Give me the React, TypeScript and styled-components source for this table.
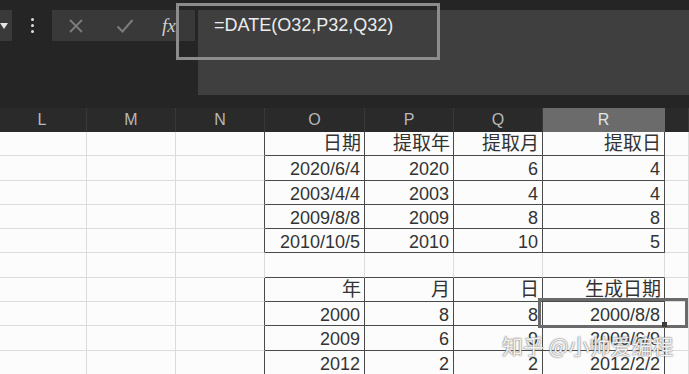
import React from 'react';
import styled, { createGlobalStyle } from 'styled-components';

const GlobalStyle = createGlobalStyle`
  html, body {
    margin: 0;
    padding: 0;
    background: #262626;
  }
  body {
    font-family: 'Liberation Sans', 'Noto Sans CJK SC', sans-serif;
  }
`;

const Window = styled.div`
  position: relative;
  width: 689px;
  height: 374px;
  overflow: hidden;
  background: #262626;
  display: flex;
  flex-direction: column;
`;

/* ---------- formula bar ---------- */

const FormulaBar = styled.div`
  flex: none;
  height: 108px;
  box-sizing: border-box;
  padding-top: 10px;
  display: flex;
  align-items: flex-start;
  background: #252525;
`;

const NameBox = styled.div`
  width: 12px;
  height: 31px;
  background: #3a3a3a;
  display: flex;
  align-items: center;
`;

const Caret = styled.span`
  width: 0;
  height: 0;
  margin-left: 0;
  border-left: 4px solid transparent;
  border-right: 4px solid transparent;
  border-top: 6px solid #e6e6e6;
`;

const DotsButton = styled.div`
  width: 40px;
  height: 31px;
  display: flex;
  flex-direction: column;
  align-items: center;
  justify-content: center;
  gap: 3px;
`;

const Dot = styled.span`
  width: 3px;
  height: 3px;
  border-radius: 50%;
  background: #dcdcdc;
`;

const EditButtons = styled.div`
  width: 143px;
  height: 31px;
  background: #393939;
  display: flex;
  align-items: center;
  padding-left: 16px;
  box-sizing: border-box;
  gap: 32px;
`;

const FxLabel = styled.span`
  font-family: 'Liberation Serif', serif;
  font-style: italic;
  font-size: 19px;
  color: #d0d0d0;
  margin-left: -4px;
`;

const FormulaInput = styled.div`
  flex: 1;
  height: 85px;
  margin-left: 3px;
  background: #3f3f3f;
  box-sizing: border-box;
  padding: 3px 0 0 16px;
  font-size: 18px;
  line-height: 24px;
  color: #ececec;
`;

const Frame = styled.div<{ $tone: string }>`
  position: absolute;
  box-sizing: border-box;
  border: 3px solid ${(p) => p.$tone};
  pointer-events: none;
`;

/* ---------- sheet ---------- */

const Sheet = styled.div`
  flex: 1;
  display: grid;
  grid-template-columns: 89px 89px 89px 100px 89px 89px 122px 1fr;
  grid-auto-rows: 24.3px;
  grid-template-rows: 24px;
  margin-left: -2px;
  background: #fcfcfc;
`;

const ColHead = styled.div<{ $active?: boolean }>`
  background: ${(p) => (p.$active ? '#6b6b6b' : '#2a2a2a')};
  color: ${(p) => (p.$active ? '#e4e4e4' : '#b8b8b8')};
  border-right: 1px solid ${(p) => (p.$active ? '#6b6b6b' : '#383838')};
  font-size: 16px;
  display: flex;
  align-items: center;
  justify-content: center;
  box-sizing: border-box;
`;

const Cell = styled.div<{ $right: string; $bottom: string; $cjk?: boolean }>`
  box-sizing: border-box;
  border-right: 1px solid ${(p) => p.$right};
  border-bottom: 1px solid ${(p) => p.$bottom};
  padding: ${(p) => (p.$cjk ? '1px 3px 0 0' : '2px 4px 0 0')};
  text-align: right;
  font-size: ${(p) => (p.$cjk ? '19px' : '18px')};
  line-height: 22px;
  color: #333;
  white-space: nowrap;
  overflow: hidden;
`;

const FillHandle = styled.span`
  position: absolute;
  left: 662px;
  top: 322px;
  width: 5px;
  height: 5px;
  background: #3c3c3c;
`;

const Watermark = styled.div`
  position: absolute;
  left: 502px;
  top: 330px;
  font-family: 'Noto Sans CJK SC', sans-serif;
  font-size: 21px;
  color: rgba(255, 255, 255, 0.92);
  text-shadow: 0 0 1px #666, 0 0 2px #888;
  white-space: nowrap;
  pointer-events: none;
`;

const COLUMNS = ['L', 'M', 'N', 'O', 'P', 'Q', 'R', ''];

// values for columns O..R, one entry per sheet row
const ROWS: string[][] = [
  ['日期', '提取年', '提取月', '提取日'],
  ['2020/6/4', '2020', '6', '4'],
  ['2003/4/4', '2003', '4', '4'],
  ['2009/8/8', '2009', '8', '8'],
  ['2010/10/5', '2010', '10', '5'],
  [],
  ['年', '月', '日', '生成日期'],
  ['2000', '8', '8', '2000/8/8'],
  ['2009', '6', '9', '2009/6/9'],
  ['2012', '2', '2', '2012/2/2'],
];

const GRID = '#dcdcdc';
const EDGE = '#4a4a4a';

const inTable = (r: number, c: number) =>
  c >= 3 && c <= 6 && ((r >= 0 && r <= 4) || (r >= 6 && r <= 9));

const isCjk = (s: string) => /[\u4e00-\u9fff]/.test(s);

function CrossIcon() {
  return (
    <svg width="16" height="16" viewBox="0 0 16 16">
      <path d="M2 2 L14 14 M14 2 L2 14" stroke="#7c7c7c" strokeWidth="1.8" fill="none" />
    </svg>
  );
}

function CheckIcon() {
  return (
    <svg width="18" height="16" viewBox="0 0 18 16">
      <path d="M1.5 8.5 L6.5 13.5 L16.5 2" stroke="#7c7c7c" strokeWidth="2" fill="none" />
    </svg>
  );
}

export default function App() {
  return (
    <Window>
      <GlobalStyle />
      <FormulaBar>
        <NameBox>
          <Caret />
        </NameBox>
        <DotsButton>
          <Dot />
          <Dot />
          <Dot />
        </DotsButton>
        <EditButtons>
          <CrossIcon />
          <CheckIcon />
          <FxLabel>fx</FxLabel>
        </EditButtons>
        <FormulaInput>=DATE(O32,P32,Q32)</FormulaInput>
      </FormulaBar>

      <Sheet>
        {COLUMNS.map((name, c) => (
          <ColHead key={`h${c}`} $active={name === 'R'}>
            {name}
          </ColHead>
        ))}
        {ROWS.map((row, r) =>
          COLUMNS.map((_, c) => {
            const value = c >= 3 && c <= 6 ? row[c - 3] ?? '' : '';
            const right = inTable(r, c) || inTable(r, c + 1) ? EDGE : GRID;
            const bottom = inTable(r, c) || inTable(r + 1, c) ? EDGE : GRID;
            return (
              <Cell key={`${r}-${c}`} $right={right} $bottom={bottom} $cjk={isCjk(value)}>
                {value}
              </Cell>
            );
          })
        )}
      </Sheet>

      <Frame $tone="#8c8c8c" style={{ left: 176, top: 3, width: 264, height: 57 }} />
      <Frame $tone="#6a6a6a" style={{ left: 538, top: 298, width: 150, height: 30 }} />
      <FillHandle />
      <Watermark>知乎 @小帅爱编程</Watermark>
    </Window>
  );
}
